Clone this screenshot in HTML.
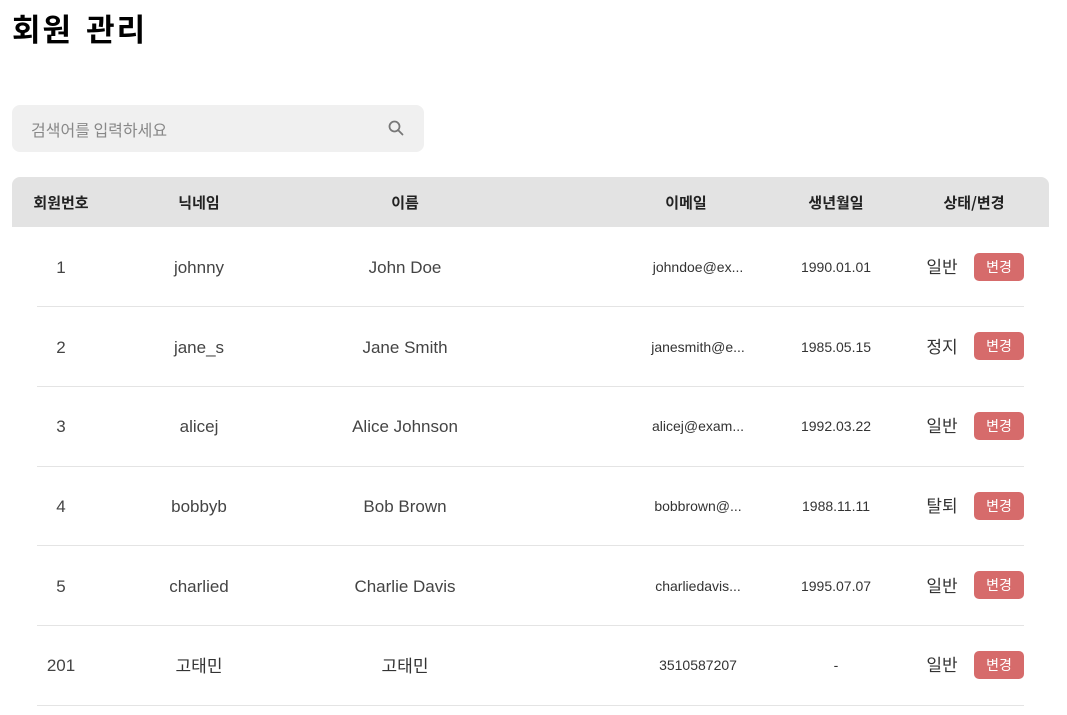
<!DOCTYPE html>
<html><head><meta charset="utf-8"><style>
*{margin:0;padding:0;box-sizing:border-box}
body{width:1067px;height:715px;background:#fff;font-family:"Liberation Sans","Noto Sans CJK KR",sans-serif;color:#333;position:relative;overflow:hidden}
h1{position:absolute;left:12px;top:8px;font-size:31px;font-weight:bold;color:#000;font-family:"Noto Sans CJK KR",sans-serif;line-height:40px;letter-spacing:2px;word-spacing:4px}
.search{position:absolute;left:12px;top:105px;width:412px;height:47px;background:#f0f0f0;border-radius:8px}
.search span{position:absolute;left:19px;top:14px;font-size:16px;color:#888;font-family:"Noto Sans CJK KR",sans-serif;line-height:20px}
.head{position:absolute;left:12px;top:177px;width:1037px;height:50px;background:#e3e3e3;border-radius:8px 8px 0 0}
.c{position:absolute;transform:translateX(-50%);white-space:nowrap;line-height:20px}
.h{top:193px;font-size:15px;font-weight:bold;color:#222;font-family:"Noto Sans CJK KR",sans-serif}
.t{font-size:17px;color:#444}
.s{font-size:14px;color:#333}
.k{font-size:17px;color:#333;font-family:"Noto Sans CJK KR",sans-serif}
.line{position:absolute;left:37px;width:987px;height:1px;background:#e4e4e4}
.btn{position:absolute;left:974px;width:50px;height:28px;background:#d66b6b;border-radius:5px;color:#fff;font-size:14px;text-align:center;line-height:28px;font-family:"Noto Sans CJK KR",sans-serif}
</style></head><body>
<h1>회원 관리</h1>
<div class="search"><span>검색어를 입력하세요</span></div>
<svg style="position:absolute;left:387px;top:119px" width="18" height="18" viewBox="0 0 18 18"><circle cx="7.5" cy="7.5" r="5" fill="none" stroke="#777" stroke-width="1.8"/><line x1="11" y1="11" x2="15.5" y2="15.5" stroke="#777" stroke-width="1.8" stroke-linecap="round"/></svg>
<div class="head"></div>
<div class="c h" style="left:61px">회원번호</div>
<div class="c h" style="left:199px">닉네임</div>
<div class="c h" style="left:405px">이름</div>
<div class="c h" style="left:686px">이메일</div>
<div class="c h" style="left:836px">생년월일</div>
<div class="c h" style="left:974px">상태/변경</div>

<div class="c t" style="left:61px;top:258px">1</div><div class="c t" style="left:199px;top:258px">johnny</div><div class="c t" style="left:405px;top:258px">John Doe</div><div class="c s" style="left:698px;top:257px">johndoe@ex...</div><div class="c s" style="left:836px;top:257px">1990.01.01</div><div class="c k" style="left:942px;top:256px">일반</div><div class="btn" style="top:253px">변경</div><div class="line" style="top:306px"></div>

<div class="c t" style="left:61px;top:338px">2</div><div class="c t" style="left:199px;top:338px">jane_s</div><div class="c t" style="left:405px;top:338px">Jane Smith</div><div class="c s" style="left:698px;top:337px">janesmith@e...</div><div class="c s" style="left:836px;top:337px">1985.05.15</div><div class="c k" style="left:942px;top:336px">정지</div><div class="btn" style="top:332px">변경</div><div class="line" style="top:386px"></div>

<div class="c t" style="left:61px;top:417px">3</div><div class="c t" style="left:199px;top:417px">alicej</div><div class="c t" style="left:405px;top:417px">Alice Johnson</div><div class="c s" style="left:698px;top:416px">alicej@exam...</div><div class="c s" style="left:836px;top:416px">1992.03.22</div><div class="c k" style="left:942px;top:415px">일반</div><div class="btn" style="top:412px">변경</div><div class="line" style="top:466px"></div>

<div class="c t" style="left:61px;top:497px">4</div><div class="c t" style="left:199px;top:497px">bobbyb</div><div class="c t" style="left:405px;top:497px">Bob Brown</div><div class="c s" style="left:698px;top:496px">bobbrown@...</div><div class="c s" style="left:836px;top:496px">1988.11.11</div><div class="c k" style="left:942px;top:495px">탈퇴</div><div class="btn" style="top:492px">변경</div><div class="line" style="top:545px"></div>

<div class="c t" style="left:61px;top:577px">5</div><div class="c t" style="left:199px;top:577px">charlied</div><div class="c t" style="left:405px;top:577px">Charlie Davis</div><div class="c s" style="left:698px;top:576px">charliedavis...</div><div class="c s" style="left:836px;top:576px">1995.07.07</div><div class="c k" style="left:942px;top:575px">일반</div><div class="btn" style="top:571px">변경</div><div class="line" style="top:625px"></div>

<div class="c t" style="left:61px;top:656px">201</div><div class="c k" style="left:199px;top:655px">고태민</div><div class="c k" style="left:405px;top:655px">고태민</div><div class="c s" style="left:698px;top:655px">3510587207</div><div class="c s" style="left:836px;top:655px">-</div><div class="c k" style="left:942px;top:654px">일반</div><div class="btn" style="top:651px">변경</div><div class="line" style="top:705px"></div>
</body></html>
